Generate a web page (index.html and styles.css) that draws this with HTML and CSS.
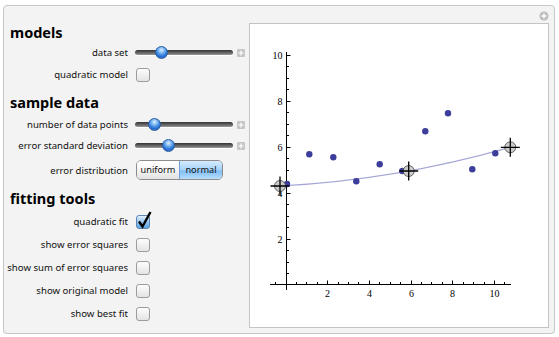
FILE: index.html
```html
<!DOCTYPE html>
<html lang="en">

<head>
    <meta charset="UTF-8">
    <title>Quadratic Fit</title>
    <link rel="stylesheet" href="styles.css">
</head>

<body>
    <div class="frame">
        <svg class="corner-plus" width="10" height="10" viewBox="0 0 10 10">
            <circle cx="5" cy="5" r="4.5" fill="#bdbdbd" />
            <path d="M2.5 5H7.5M5 2.5V7.5" stroke="#fff" stroke-width="1.4" />
        </svg>

        <div class="controls">
            <section class="group">
                <h2>models</h2>
                <div class="row">
                    <label>data set</label>
                    <div class="slider" style="--v: 0.23"><span class="knob"></span></div>
                    <svg class="plus" width="8" height="8" viewBox="0 0 8 8">
                        <rect width="8" height="8" rx="1" fill="#c6c6c6" />
                        <path d="M1.5 4H6.5M4 1.5V6.5" stroke="#fff" stroke-width="1.2" />
                    </svg>
                </div>
                <div class="row tall">
                    <label>quadratic model</label>
                    <span class="box"></span>
                </div>
            </section>

            <section class="group">
                <h2>sample data</h2>
                <div class="row">
                    <label>number of data points</label>
                    <div class="slider" style="--v: 0.15"><span class="knob"></span></div>
                    <svg class="plus" width="8" height="8" viewBox="0 0 8 8">
                        <rect width="8" height="8" rx="1" fill="#c6c6c6" />
                        <path d="M1.5 4H6.5M4 1.5V6.5" stroke="#fff" stroke-width="1.2" />
                    </svg>
                </div>
                <div class="row">
                    <label>error standard deviation</label>
                    <div class="slider" style="--v: 0.32"><span class="knob"></span></div>
                    <svg class="plus" width="8" height="8" viewBox="0 0 8 8">
                        <rect width="8" height="8" rx="1" fill="#c6c6c6" />
                        <path d="M1.5 4H6.5M4 1.5V6.5" stroke="#fff" stroke-width="1.2" />
                    </svg>
                </div>
                <div class="row wide">
                    <label>error distribution</label>
                    <div class="toggle">
                        <span>uniform</span>
                        <span class="on">normal</span>
                    </div>
                </div>
            </section>

            <section class="group">
                <h2>fitting tools</h2>
                <div class="row tall">
                    <label>quadratic fit</label>
                    <span class="box checked">
                        <svg class="tick" width="18" height="19" viewBox="0 0 18 19">
                            <polyline points="4,11.5 7.5,16.5 15.5,2" fill="none" stroke="#000" stroke-width="2.4" />
                        </svg>
                    </span>
                </div>
                <div class="row tall">
                    <label>show error squares</label>
                    <span class="box"></span>
                </div>
                <div class="row tall">
                    <label>show sum of error squares</label>
                    <span class="box"></span>
                </div>
                <div class="row tall">
                    <label>show original model</label>
                    <span class="box"></span>
                </div>
                <div class="row tall">
                    <label>show best fit</label>
                    <span class="box"></span>
                </div>
            </section>
        </div>

        <div class="plot">
            <svg width="298" height="303" viewBox="250 24 298 303">
                <!-- axes -->
                <path class="axis" d="M270 284.5H511M286.5 52V290" />
                <path class="axis" d="M275.5 284v-2M296.5 284v-2M306.5 284v-2M317.5 284v-2M338.5 284v-2M348.5 284v-2M358.5 284v-2M379.5 284v-2M390.5 284v-2M400.5 284v-2M421.5 284v-2M431.5 284v-2M442.5 284v-2M463.5 284v-2M473.5 284v-2M484.5 284v-2M504.5 284v-2" />
                <path class="axis" d="M327.5 284v-3.5M369.5 284v-3.5M411.5 284v-3.5M452.5 284v-3.5M494.5 284v-3.5" />
                <path class="axis" d="M287 273.5h2M287 262.5h2M287 250.5h2M287 227.5h2M287 216.5h2M287 204.5h2M287 181.5h2M287 170.5h2M287 158.5h2M287 135.5h2M287 124.5h2M287 112.5h2M287 89.5h2M287 78.5h2M287 66.5h2" />
                <path class="axis" d="M287 239.5h3.5M287 193.5h3.5M287 147.5h3.5M287 101.5h3.5M287 55.5h3.5" />

                <g class="ylabels">
                    <text x="282.5" y="55.5">10</text>
                    <text x="282.5" y="101.5">8</text>
                    <text x="282.5" y="147.5">6</text>
                    <text x="282.5" y="193.5">4</text>
                    <text x="282.5" y="239.5">2</text>
                </g>
                <g class="xlabels">
                    <text x="327.5" y="297">2</text>
                    <text x="369.5" y="297">4</text>
                    <text x="411.5" y="297">6</text>
                    <text x="452.5" y="297">8</text>
                    <text x="494.5" y="297">10</text>
                </g>

                <path class="fit" d="M280 186Q395.15 180.09 510.3 147.3" />

                <g class="points">
                    <circle cx="287" cy="184" r="3.2" />
                    <circle cx="309.3" cy="154.3" r="3.2" />
                    <circle cx="333.3" cy="157.3" r="3.2" />
                    <circle cx="356.3" cy="181.3" r="3.2" />
                    <circle cx="379.7" cy="164.3" r="3.2" />
                    <circle cx="402.3" cy="171" r="3.2" />
                    <circle cx="425.3" cy="131.3" r="3.2" />
                    <circle cx="448" cy="113.3" r="3.2" />
                    <circle cx="472.3" cy="169.3" r="3.2" />
                    <circle cx="495.3" cy="153.3" r="3.2" />
                </g>

                <g class="locator" transform="translate(280 186)">
                    <circle r="5.5" />
                    <path d="M-9.5 0H9.5M0 -9.5V9.5" />
                </g>
                <g class="locator" transform="translate(408.7 171)">
                    <circle r="5.5" />
                    <path d="M-9.5 0H9.5M0 -9.5V9.5" />
                </g>
                <g class="locator" transform="translate(510.3 147.3)">
                    <circle r="5.5" />
                    <path d="M-9.5 0H9.5M0 -9.5V9.5" />
                </g>
            </svg>
        </div>
    </div>
</body>

</html>
```

FILE: styles.css
```css
* {
    box-sizing: border-box;
}

body {
    margin: 0;
    background-color: #fff;
    font-family: "Noto Sans", "DejaVu Sans", sans-serif;
    color: #1e1e1e;
}

.frame {
    position: relative;
    display: flex;
    width: 552px;
    height: 329px;
    margin: 5px 0 0 3px;
    padding: 16px 0 0 3px;
    background-color: #f3f3f3;
    border: 1px solid #c8c8c8;
    border-radius: 4px;
    box-shadow: 0 1px 1px rgba(0, 0, 0, 0.06);
}

.corner-plus {
    position: absolute;
    top: 5px;
    right: 5px;
}

.controls {
    flex: 0 0 242px;
}

.group h2 {
    height: 20px;
    margin: 0 0 2px;
    padding-left: 3px;
    font-size: 14.5px;
    font-weight: 700;
    line-height: 20px;
    color: #000;
}

.group:first-child h2 {
    margin-bottom: 0;
}

.group + .group {
    margin-top: 6px;
}

.group:last-child {
    margin-top: 4px;
}

.row {
    display: flex;
    align-items: center;
    height: 21px;
}

.row.tall {
    height: 23px;
}

.row.wide {
    height: 28px;
}

.row label {
    width: 121px;
    margin-right: 7px;
    font-size: 9.6px;
    text-align: right;
    white-space: nowrap;
    color: #111;
}

/* slider */

.slider {
    position: relative;
    width: 98px;
    height: 5px;
    border-radius: 3px;
    background: linear-gradient(#333, #6a6a6a 60%, #9a9a9a);
    box-shadow: 0 1px 0 #fff;
}

.knob {
    position: absolute;
    top: -4px;
    left: calc(var(--v) * (100% - 13px));
    width: 13px;
    height: 13px;
    border: 1px solid #2a5da3;
    border-radius: 50%;
    background: radial-gradient(circle at 50% 28%, #e4f1ff 0, #8cc2f6 25%, #3a84de 55%, #2466c6 75%, #7bb8f4 100%);
}

.plus {
    margin-left: 4px;
}

/* checkbox */

.box {
    position: relative;
    width: 14px;
    height: 14px;
    margin-left: 1px;
    border: 1px solid #9c9c9c;
    border-radius: 3px;
    background: linear-gradient(#fdfdfd, #e4e4e4);
}

.box.checked {
    border-color: #5d86b5;
    background: linear-gradient(#e2f0fd, #8cc0ee 55%, #5ea4e4);
}

.tick {
    position: absolute;
    top: -6px;
    left: -2px;
}

/* setter bar */

.toggle {
    display: flex;
    height: 20px;
    margin-left: 1px;
    border: 1px solid #8c8c8c;
    border-radius: 5px;
    overflow: hidden;
    font-size: 9.2px;
}

.toggle span {
    width: 42px;
    line-height: 18px;
    text-align: center;
    background: linear-gradient(#fff, #f4f4f4 50%, #e2e2e2);
    color: #111;
}

.toggle span.on {
    width: 43px;
    border-left: 1px solid #6e9fd6;
    background: linear-gradient(#d3ebfe, #a6d3fa 50%, #7fbdf5 55%, #b9defc);
}

/* plot */

.plot {
    width: 300px;
    height: 305px;
    margin-top: 1px;
    background-color: #fff;
    border: 1px solid #c4c4c4;
}

.plot svg {
    display: block;
}

.axis {
    fill: none;
    stroke: #000;
    stroke-width: 1;
}

.ylabels text,
.xlabels text {
    font-family: "Liberation Serif", serif;
    font-size: 10px;
    fill: #000;
}

.ylabels text {
    text-anchor: end;
    dominant-baseline: central;
}

.xlabels text {
    text-anchor: middle;
}

.fit {
    fill: none;
    stroke: #a4a4d6;
    stroke-width: 1.2;
}

.points circle {
    fill: #3d3d9b;
}

.locator circle {
    fill: #cbcbcb;
    stroke: #444;
    stroke-width: 0.8;
}

.locator path {
    stroke: #000;
    stroke-width: 1.3;
}
```
